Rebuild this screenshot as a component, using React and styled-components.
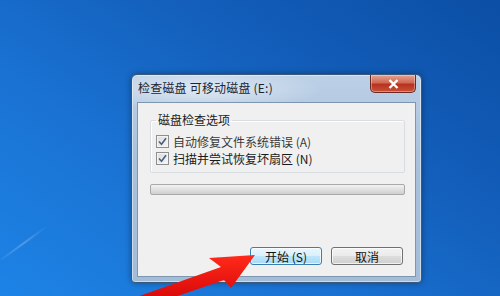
import React from 'react'
import styled, { createGlobalStyle } from 'styled-components'

const GlobalStyle = createGlobalStyle`
  html, body {
    margin: 0;
    padding: 0;
  }
  body {
    font-family: "Noto Sans CJK SC", "Noto Sans", sans-serif;
  }
`

const Desktop = styled.div`
  position: relative;
  width: 500px;
  height: 296px;
  overflow: hidden;
  box-sizing: border-box;
  padding: 74px 0 0 131px;
  background: linear-gradient(35deg, #1d83e6 0%, #1a72d2 35%, #135fbb 65%, #0b4ea5 100%);
`

const Streak = styled.div`
  position: absolute;
  left: -4px;
  top: 242px;
  width: 56px;
  height: 2px;
  background: linear-gradient(to right, rgba(255, 255, 255, 0.05), rgba(255, 255, 255, 0.22), rgba(255, 255, 255, 0));
  filter: blur(0.6px);
  transform: rotate(-36deg);
`

const Window = styled.div`
  width: 291px;
  height: 209px;
  box-sizing: border-box;
  display: flex;
  flex-direction: column;
  padding: 0 5px 5px 5px;
  border: 1px solid #3b5878;
  border-radius: 6px 6px 4px 4px;
  background:
    radial-gradient(ellipse 120px 22px at 70px 14px, rgba(255, 255, 255, 0.55), rgba(255, 255, 255, 0) 100%),
    linear-gradient(to bottom, #bcd0e6 0%, #a9c1dc 40%, #a3bcd8 100%);
  box-shadow: inset 0 0 0 1px rgba(255, 255, 255, 0.45), 0 0 6px rgba(0, 0, 0, 0.35);
`

const TitleBar = styled.div`
  height: 27px;
  display: flex;
  align-items: flex-start;
  justify-content: space-between;
`

const Title = styled.span`
  margin: 5px 0 0 1px;
  font-size: 12px;
  line-height: 16px;
  color: #1c2430;
  letter-spacing: 0.2px;
`

const CloseButton = styled.div`
  width: 46px;
  height: 18px;
  box-sizing: border-box;
  display: flex;
  align-items: center;
  justify-content: center;
  border: 1px solid #6b2a24;
  border-top: none;
  border-radius: 0 0 5px 5px;
  background: linear-gradient(to bottom, #e6a190 0%, #cf6a55 45%, #b8321e 55%, #c9523a 100%);
  box-shadow: inset 0 0 0 1px rgba(255, 255, 255, 0.35);
`

const Client = styled.div`
  flex: 1;
  display: flex;
  flex-direction: column;
  background: #f0f0f0;
  border: 1px solid #7e96b0;
`

const Group = styled.fieldset`
  margin: 9px 10px 0 12px;
  padding: 5px 6px 5px 5px;
  border: 1px solid #d8dde2;
  border-radius: 2px;
  box-shadow: inset 1px 1px 0 #ffffff;
`

const Legend = styled.legend`
  padding: 0 2px;
  font-size: 12px;
  line-height: 16px;
  color: #1a1a1a;
`

const Row = styled.label`
  height: 17px;
  display: flex;
  align-items: center;
  gap: 4px;
  font-size: 12px;
  color: ${(p) => (p.$dim ? '#3a3a3a' : '#1a1a1a')};
`

const Box = styled.span`
  width: 13px;
  height: 13px;
  box-sizing: border-box;
  display: flex;
  align-items: center;
  justify-content: center;
  border: 1px solid #8f8f8f;
  background: linear-gradient(135deg, #dcdcdc 0%, #f6f6f6 100%);
  box-shadow: inset 0 0 0 1px #f4f4f4;
`

const Progress = styled.div`
  margin: 11px 10px 0 12px;
  height: 11px;
  box-sizing: border-box;
  border: 1px solid #a9a9a9;
  border-radius: 2px;
  background: linear-gradient(to bottom, #f2f2f2 0%, #e0e0e0 50%, #cfcfcf 100%);
`

const Buttons = styled.div`
  margin-top: auto;
  display: flex;
  justify-content: flex-end;
  gap: 9px;
  padding: 0 12px 11px 0;
`

const Button = styled.div`
  width: 72px;
  height: 18px;
  box-sizing: border-box;
  display: flex;
  align-items: center;
  justify-content: center;
  font-size: 12px;
  color: #111;
  border-radius: 3px;
  border: 1px solid ${(p) => (p.$active ? '#3c7fb1' : '#707070')};
  background: ${(p) =>
    p.$active
      ? 'linear-gradient(to bottom, #eaf6fd 0%, #d9f0fc 50%, #bee6fd 51%, #a7d9f5 100%)'
      : 'linear-gradient(to bottom, #f2f2f2 0%, #ebebeb 50%, #dddddd 51%, #cfcfcf 100%)'};
  box-shadow: inset 0 0 0 1px rgba(255, 255, 255, 0.7);
`

const Arrow = styled.svg`
  position: absolute;
  left: 0;
  top: 0;
  pointer-events: none;
`

function Check() {
  return (
    <Box>
      <svg width="9" height="9" viewBox="0 0 9 9">
        <path d="M1 4.5 L3.5 7.2 L8 1.2" fill="none" stroke="#4a5f80" strokeWidth="1.6" />
      </svg>
    </Box>
  )
}

export default function App() {
  return (
    <>
      <GlobalStyle />
      <Desktop>
        <Streak />
        <Window>
          <TitleBar>
            <Title>检查磁盘 可移动磁盘 (E:)</Title>
            <CloseButton>
              <svg width="11" height="10" viewBox="0 0 11 10">
                <path d="M1.5 1 L9.5 9 M9.5 1 L1.5 9" stroke="#ffffff" strokeWidth="2.4" />
              </svg>
            </CloseButton>
          </TitleBar>
          <Client>
            <Group>
              <Legend>磁盘检查选项</Legend>
              <Row $dim>
                <Check />
                自动修复文件系统错误 (A)
              </Row>
              <Row>
                <Check />
                扫描并尝试恢复坏扇区 (N)
              </Row>
            </Group>
            <Progress />
            <Buttons>
              <Button $active>开始 (S)</Button>
              <Button>取消</Button>
            </Buttons>
          </Client>
        </Window>
        <Arrow width="500" height="296" viewBox="0 0 500 296">
          <defs>
            <linearGradient id="arrowFill" x1="0" y1="0" x2="0" y2="1">
              <stop offset="0" stopColor="#ff2a1a" />
              <stop offset="1" stopColor="#d80808" />
            </linearGradient>
          </defs>
          <polygon
            points="255,255 209,258 221,267 128,300 166,300 224,280 231,288"
            fill="url(#arrowFill)"
          />
        </Arrow>
      </Desktop>
    </>
  )
}
